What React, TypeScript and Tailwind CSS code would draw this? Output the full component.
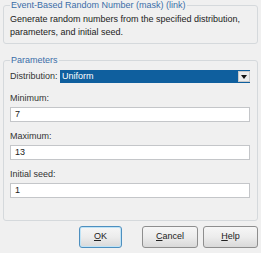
function Field({ label, value }: { label: string; value: string }) {
  return (
    <div className="flex flex-col">
      <div className="h-[13px] leading-[13px] text-[#333]">{label}</div>
      <div className="mt-[2px] h-[15px] border border-[#c4c6c9] bg-white pl-[4px] leading-[13px] text-[#222]">
        {value}
      </div>
    </div>
  );
}

function Button({ children, primary }: { children: React.ReactNode; primary?: boolean }) {
  return (
    <button
      className={`h-[22px] w-full rounded-[3px] border bg-gradient-to-b from-[#f6f6f6] via-[#ececec] to-[#d9d9d9] text-[#222] ${
        primary ? "border-[#4d8fbf] shadow-[inset_0_0_0_1px_#bfe3f6]" : "border-[#8e8e8e]"
      }`}
    >
      {children}
    </button>
  );
}

export default function App() {
  return (
    <div
      className="flex h-[253px] w-[261px] flex-col bg-[#f0f0f0] px-[3px] text-[9px]"
      style={{ fontFamily: '"Liberation Sans", Arial, sans-serif' }}
    >
      <fieldset className="rounded-[3px] border border-[#d5d9dc] pl-[6px] pr-[6px] pb-[4px]">
        <legend className="px-[1px] leading-[10px] text-[#3b6ea8]">
          Event-Based Random Number (mask) (link)
        </legend>
        <div className="mt-[3px] leading-[13px] text-[#222]">
          Generate random numbers from the specified distribution,
          <br />
          parameters, and initial seed.
        </div>
      </fieldset>

      <fieldset className="mt-[11px] rounded-[3px] border border-[#d5d9dc] pl-[6px] pr-[7px] pb-[22px]">
        <legend className="px-[1px] leading-[10px] text-[#3b6ea8]">Parameters</legend>

        <div className="mt-[5px] flex items-center">
          <div className="w-[50px] text-[#333]">Distribution:</div>
          <div className="flex h-[13px] flex-1 items-center bg-[#0f5f9e] pl-[2px] text-white">
            <span className="flex-1 leading-[13px]">Uniform</span>
            <span className="flex h-[11px] w-[12px] items-center justify-center border border-[#c9c9c9] bg-[#ececec]">
              <svg width="6" height="4" viewBox="0 0 6 4">
                <path d="M0 0h6L3 4z" fill="#111" />
              </svg>
            </span>
          </div>
        </div>

        <div className="mt-[8px] flex flex-col gap-[8px]">
          <Field label="Minimum:" value="7" />
          <Field label="Maximum:" value="13" />
          <Field label="Initial seed:" value="1" />
        </div>
      </fieldset>

      <div className="mt-[5px] flex justify-end">
        <div className="w-[43px]">
          <Button primary>
            <u>O</u>K
          </Button>
        </div>
        <div className="ml-[20px] w-[56px]">
          <Button>
            <u>C</u>ancel
          </Button>
        </div>
        <div className="ml-[5px] w-[55px]">
          <Button>
            <u>H</u>elp
          </Button>
        </div>
      </div>
    </div>
  );
}
